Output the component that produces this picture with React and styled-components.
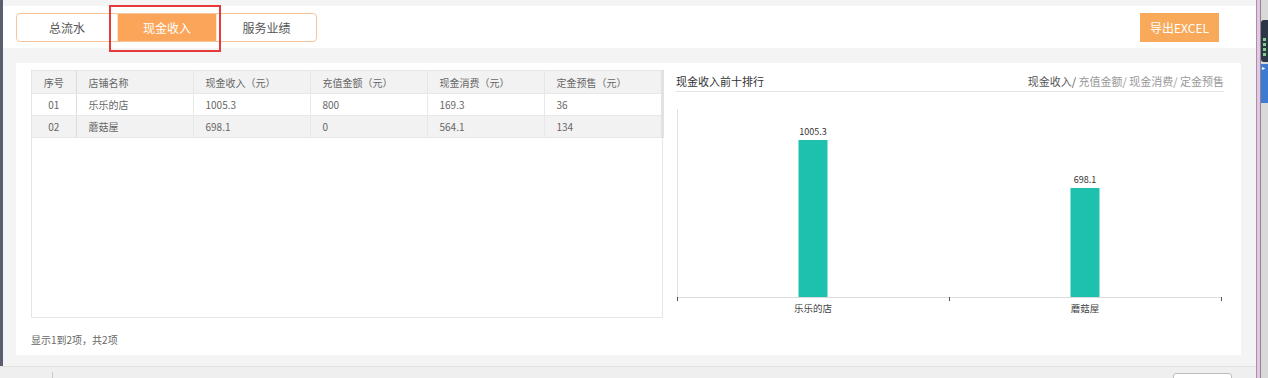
import React from 'react'
import styled, { createGlobalStyle } from 'styled-components'

const GlobalStyle = createGlobalStyle`
  html, body {
    margin: 0;
    padding: 0;
  }
  body {
    font-family: "Noto Sans CJK SC", "Noto Sans", sans-serif;
    background: #f4f4f4;
    overflow: hidden;
  }
`

const tabs = ['总流水', '现金收入', '服务业绩']

const columns = [
    { title: '序号', width: 44, center: true },
    { title: '店铺名称', width: 117 },
    { title: '现金收入（元）', width: 117 },
    { title: '充值金额（元）', width: 117 },
    { title: '现金消费（元）', width: 117 },
    { title: '定金预售（元）', width: 118 },
]

const rows = [
    ['01', '乐乐的店', '1005.3', '800', '169.3', '36'],
    ['02', '蘑菇屋', '698.1', '0', '564.1', '134'],
]

const ranking = [
    { name: '乐乐的店', value: 1005.3 },
    { name: '蘑菇屋', value: 698.1 },
]

function BarChart({ data }) {
    const width = 548
    const baseY = 205
    const band = 272
    const maxH = 157
    const max = Math.max(...data.map((d) => d.value))

    return (
        <ChartSvg width={width} height={226} viewBox={`0 0 ${width} 226`}>
            <line x1="1.5" y1="17" x2="1.5" y2={baseY} stroke="#e2e2e2" />
            <line x1="1" y1={baseY + 0.5} x2="546" y2={baseY + 0.5} stroke="#dcdcdc" />
            {[0, 1, 2].map((i) => (
                <line
                    key={i}
                    x1={1.5 + i * band}
                    y1={baseY}
                    x2={1.5 + i * band}
                    y2={baseY + 4}
                    stroke="#555"
                />
            ))}
            {data.map((d, i) => {
                const cx = 1 + band * i + band / 2
                const h = (d.value / max) * maxH
                return (
                    <g key={d.name}>
                        <rect
                            x={cx - 14.5}
                            y={baseY - h}
                            width="29"
                            height={h}
                            fill="#1ec0ae"
                        />
                        <text
                            x={cx}
                            y={baseY - h - 5}
                            textAnchor="middle"
                            fontSize="9"
                            fill="#333"
                        >
                            {d.value}
                        </text>
                        <text
                            x={cx}
                            y={baseY + 15}
                            textAnchor="middle"
                            fontSize="9.5"
                            fill="#444"
                        >
                            {d.name}
                        </text>
                    </g>
                )
            })}
        </ChartSvg>
    )
}

function App() {
    return (
        <>
            <GlobalStyle />
            <Page>
                <Workspace>
                    <Upper>
                        <LeftEdge />
                        <Main>
                            <Header>
                                <TabGroup>
                                    {tabs.map((t, i) => (
                                        <Tab key={t} $active={i === 1} $w={i === 2 ? 99 : 100}>
                                            {t}
                                        </Tab>
                                    ))}
                                    <Highlight />
                                </TabGroup>
                                <ExportButton>导出EXCEL</ExportButton>
                            </Header>
                            <Content>
                                <Card>
                                    <LeftPanel>
                                        <TableBox>
                                            <DataTable>
                                                <thead>
                                                    <tr>
                                                        {columns.map((c) => (
                                                            <Th key={c.title} $w={c.width} $center={c.center}>
                                                                {c.title}
                                                            </Th>
                                                        ))}
                                                    </tr>
                                                </thead>
                                                <tbody>
                                                    {rows.map((r, ri) => (
                                                        <Tr key={r[0]} $odd={ri % 2 === 1}>
                                                            {r.map((cell, ci) => (
                                                                <Td key={ci} $center={columns[ci].center}>
                                                                    {cell}
                                                                </Td>
                                                            ))}
                                                        </Tr>
                                                    ))}
                                                </tbody>
                                            </DataTable>
                                        </TableBox>
                                        <Summary>显示1到2项，共2项</Summary>
                                    </LeftPanel>
                                    <ChartPanel>
                                        <ChartHead>
                                            <ChartTitle>现金收入前十排行</ChartTitle>
                                            <Legend>
                                                <LegendItem $on>现金收入/</LegendItem>
                                                <LegendItem> 充值金额/</LegendItem>
                                                <LegendItem> 现金消费/</LegendItem>
                                                <LegendItem> 定金预售</LegendItem>
                                            </Legend>
                                        </ChartHead>
                                        <BarChart data={ranking} />
                                    </ChartPanel>
                                </Card>
                            </Content>
                        </Main>
                    </Upper>
                    <BottomBar>
                        <BottomDivider />
                        <BottomButton />
                    </BottomBar>
                </Workspace>
                <RightRail>
                    <PinkBar />
                    <Dock>
                        <DockWidget>
                            <Led /><Led /><Led /><Led />
                        </DockWidget>
                        <DockBlue>▸</DockBlue>
                    </Dock>
                </RightRail>
            </Page>
        </>
    )
}

const Page = styled.div`
    width: 1268px;
    height: 378px;
    display: flex;
    overflow: hidden;
`

const Workspace = styled.div`
    width: 1256px;
    display: flex;
    flex-direction: column;
`

const Upper = styled.div`
    height: 366px;
    display: flex;
`

const LeftEdge = styled.div`
    width: 3px;
    background: #5a5e6e;
`

const Main = styled.div`
    flex: 1;
    display: flex;
    flex-direction: column;
    padding-top: 6px;
    background: #f4f4f4;
`

const Header = styled.div`
    height: 42px;
    box-sizing: border-box;
    background: #fff;
    padding: 7px 37px 0 13px;
    display: flex;
    justify-content: space-between;
    align-items: flex-start;
`

const TabGroup = styled.div`
    position: relative;
    display: flex;
    height: 29px;
    box-sizing: border-box;
    border: 1px solid #f7c59c;
    border-radius: 4px;
`

const Tab = styled.div`
    width: ${(p) => p.$w}px;
    box-sizing: border-box;
    display: flex;
    align-items: center;
    justify-content: center;
    font-size: 12px;
    color: ${(p) => (p.$active ? '#fff' : '#555')};
    background: ${(p) => (p.$active ? '#fba55a' : 'transparent')};
    border-left: ${(p) => (p.$active ? '1px solid #fde3c9' : 'none')};
    border-right: ${(p) => (p.$active ? '1px solid #fde3c9' : 'none')};
    cursor: pointer;
`

const Highlight = styled.div`
    position: absolute;
    left: 92px;
    top: -9px;
    width: 112px;
    height: 47px;
    box-sizing: border-box;
    border: 2px solid #e8393a;
    pointer-events: none;
`

const ExportButton = styled.button`
    width: 79px;
    height: 29px;
    border: none;
    background: #f9a95a;
    color: #fff;
    font-family: inherit;
    font-size: 12px;
    padding: 0;
    cursor: pointer;
`

const Content = styled.div`
    padding: 15px 15px 0 13px;
`

const Card = styled.div`
    height: 292px;
    box-sizing: border-box;
    background: #fff;
    padding: 7px 17px 0 15px;
    display: flex;
    gap: 13px;
`

const LeftPanel = styled.div`
    width: 632px;
    display: flex;
    flex-direction: column;
`

const TableBox = styled.div`
    height: 248px;
    box-sizing: border-box;
    border: 1px solid #e6e6e6;
    border-top: none;
`

const DataTable = styled.table`
    width: 630px;
    border-collapse: collapse;
    table-layout: fixed;
    font-size: 10px;
    color: #666;
`

const Th = styled.th`
    width: ${(p) => p.$w}px;
    height: 23px;
    padding: 0 ${(p) => (p.$center ? 0 : 12)}px;
    box-sizing: border-box;
    background: #f2f2f2;
    font-weight: normal;
    text-align: ${(p) => (p.$center ? 'center' : 'left')};
    border-top: 1px solid #e6e6e6;
    border-right: 1px solid ${(p) => (p.$center ? '#dcdcdc' : '#e6e6e6')};
    border-bottom: 1px solid #e8e8e8;
    &:last-child {
        border-right: 3px solid #e2e2e2;
    }
`

const Tr = styled.tr`
    background: ${(p) => (p.$odd ? '#f2f2f2' : '#fff')};
`

const Td = styled.td`
    height: 22px;
    padding: 0 ${(p) => (p.$center ? 0 : 12)}px;
    box-sizing: border-box;
    text-align: ${(p) => (p.$center ? 'center' : 'left')};
    border-right: 1px solid ${(p) => (p.$center ? '#dcdcdc' : '#e8e8e8')};
    border-bottom: 1px solid #e8e8e8;
    &:last-child {
        border-right: 3px solid #e2e2e2;
    }
`

const Summary = styled.div`
    margin-top: 15px;
    font-size: 10px;
    line-height: 14px;
    color: #666;
`

const ChartPanel = styled.div`
    flex: 1;
    display: flex;
    flex-direction: column;
`

const ChartHead = styled.div`
    height: 22px;
    box-sizing: border-box;
    border-bottom: 1px solid #e4e4e4;
    display: flex;
    justify-content: space-between;
    align-items: center;
    font-size: 11px;
`

const ChartTitle = styled.span`
    color: #333;
`

const Legend = styled.div`
    display: flex;
    white-space: pre;
`

const LegendItem = styled.span`
    color: ${(p) => (p.$on ? '#555' : '#9a9a9a')};
    cursor: pointer;
`

const ChartSvg = styled.svg`
    display: block;
    font-family: "Noto Sans CJK SC", "Noto Sans", sans-serif;
`

const BottomBar = styled.div`
    flex: 1;
    position: relative;
    background: #efefef;
    border-top: 1px solid #e2e2e2;
`

const BottomDivider = styled.div`
    position: absolute;
    left: 52px;
    top: 5px;
    bottom: 0;
    width: 1px;
    background: #c8c8c8;
`

const BottomButton = styled.div`
    position: absolute;
    left: 1173px;
    top: 6px;
    width: 57px;
    height: 10px;
    background: #fff;
    border: 1px solid #bdbdbd;
    border-radius: 3px;
`

const RightRail = styled.div`
    width: 12px;
    display: flex;
`

const PinkBar = styled.div`
    width: 5px;
    background: #e6c6e4;
    border-left: 1px solid #a791a6;
    border-right: 1px solid #8f8390;
    box-sizing: border-box;
`

const Dock = styled.div`
    flex: 1;
    background: #d9d9d9;
    display: flex;
    flex-direction: column;
    padding-top: 20px;
    gap: 2px;
`

const DockWidget = styled.div`
    height: 42px;
    background: #2c3646;
    border-radius: 3px 0 0 3px;
    display: flex;
    flex-direction: column;
    justify-content: flex-end;
    gap: 2px;
    padding: 0 0 6px 2px;
    box-sizing: border-box;
`

const Led = styled.div`
    width: 3px;
    height: 3px;
    background: #7fcf8a;
`

const DockBlue = styled.div`
    height: 39px;
    background: #3d7bd2;
    color: #fff;
    font-size: 6px;
    line-height: 8px;
    padding-left: 1px;
`

export default App
